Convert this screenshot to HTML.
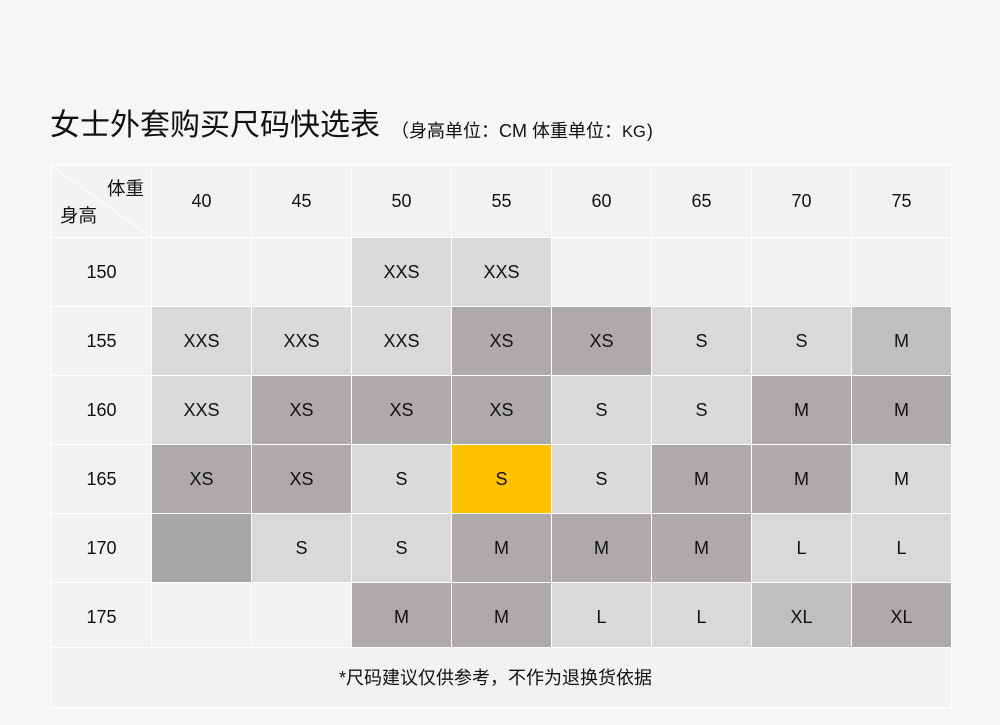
<!DOCTYPE html>
<html lang="zh"><head><meta charset="utf-8"><style>
html,body{margin:0;padding:0}
body{width:1000px;height:725px;background:#f6f6f6;position:relative;overflow:hidden;color:#111;font-family:"Liberation Sans","Noto Sans CJK SC",sans-serif}
.t{position:absolute;white-space:nowrap;line-height:1}
#g{position:absolute;left:51px;top:165px;width:901px;height:543px;box-sizing:border-box;background:#fff;padding:1px;display:grid;gap:1px;grid-template-columns:repeat(9,99px);grid-template-rows:71px 68px 68px 68px 68px 68px 64px 59px;font-size:18px}
#g>div{background:#f2f2f2;display:flex;align-items:center;justify-content:center}
#g>div.a{background:#d9d9d9}
#g>div.b{background:#aeaaaa}
#g>div.c{background:#bfbfbf}
#g>div.y{background:#ffc000}
#g>div.k{background:#a6a6a6}
#g>div.n{grid-column:1/10}
#g>div.l{padding-top:4px;box-sizing:border-box}
</style></head><body>
<div class="t" style="left:50px;top:111px;font-size:30px">女士外套购买尺码快选表</div>
<div class="t" style="left:391px;top:122px;font-size:18px">（身高单位：CM 体重单位：<span style="font-size:16.5px">KG</span><span style="margin-left:1px">)</span></div>
<div id="g">
<div></div><div>40</div><div>45</div><div>50</div><div>55</div><div>60</div><div>65</div><div>70</div><div>75</div>
<div>150</div><div></div><div></div><div class="a">XXS</div><div class="a">XXS</div><div></div><div></div><div></div><div></div>
<div>155</div><div class="a">XXS</div><div class="a">XXS</div><div class="a">XXS</div><div class="b">XS</div><div class="b">XS</div><div class="a">S</div><div class="a">S</div><div class="c">M</div>
<div>160</div><div class="a">XXS</div><div class="b">XS</div><div class="b">XS</div><div class="b">XS</div><div class="a">S</div><div class="a">S</div><div class="b">M</div><div class="b">M</div>
<div>165</div><div class="b">XS</div><div class="b">XS</div><div class="a">S</div><div class="y">S</div><div class="a">S</div><div class="b">M</div><div class="b">M</div><div class="a">M</div>
<div>170</div><div class="k"></div><div class="a">S</div><div class="a">S</div><div class="b">M</div><div class="b">M</div><div class="b">M</div><div class="a">L</div><div class="a">L</div>
<div class="l">175</div><div class="l"></div><div class="l"></div><div class="b l">M</div><div class="b l">M</div><div class="a l">L</div><div class="a l">L</div><div class="c l">XL</div><div class="b l">XL</div>
<div class="n"></div>
</div>
<svg style="position:absolute;left:0;top:0" width="1000" height="725"><line x1="52" y1="166" x2="151" y2="237" stroke="#fff" stroke-width="1"/></svg>
<div class="t" style="left:107px;top:180px;font-size:18.5px">体重</div>
<div class="t" style="left:60px;top:207px;font-size:18.5px">身高</div>
<div class="t" style="left:339px;top:669px;font-size:18px">*尺码建议仅供参考，不作为退换货依据</div>
</body></html>
